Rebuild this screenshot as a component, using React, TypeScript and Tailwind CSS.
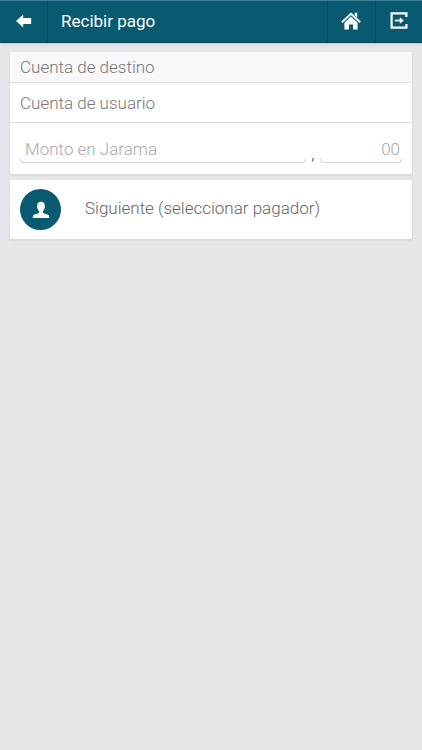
import { useState } from 'react';

function BackIcon() {
  return (
    <svg width="16" height="14" viewBox="0 0 16 14" fill="currentColor" aria-hidden="true">
      <path d="M0 7 7.2 0.4V4H15.2V10H7.2V13.6Z" />
    </svg>
  );
}

function HomeIcon() {
  return (
    <svg width="20" height="18" viewBox="0 0 20 18" aria-hidden="true">
      <path d="M13.6 0.8h2.6v5l-2.6-2.5z" fill="currentColor" />
      <path d="M0.9 10.2 10 1.7l9.1 8.5" fill="none" stroke="currentColor" strokeWidth="1.9" />
      <path d="M10 4.6 3.4 10.8v6.6H8V12.6h4v4.8h4.6V10.8z" fill="currentColor" />
    </svg>
  );
}

function LogoutIcon() {
  return (
    <svg width="18" height="17" viewBox="0 0 18 17" fill="none" stroke="currentColor" aria-hidden="true">
      <path d="M16.4 5V1.4H1.6V15.6H16.4V12" strokeWidth="2.2" />
      <path d="M4.8 8.5h6" strokeWidth="1.8" />
      <path d="M9.8 5.2 13.8 8.5 9.8 11.8z" fill="currentColor" stroke="none" />
    </svg>
  );
}

function PersonIcon() {
  return (
    <svg width="18" height="18" viewBox="0 0 18 18" fill="currentColor" aria-hidden="true">
      <path d="M9 0.8c2.5 0 3.8 1.5 3.8 3.8 0 .5 0 .8-.1 1.1.5.2.4 1.5-.3 1.9-.3 1.3-.8 2.1-1.4 2.7v1.4c1.5 1 4.2 1.3 5.4 2.2.7.6.9 1.6.9 3.1H0.7c0-1.500.2-2.500.9-3.100 1.200-.9 3.900-1.200 5.400-2.200v-1.400c-.6-.6-1.100-1.400-1.400-2.700-.7-.4-.8-1.700-.3-1.900-.1-.3-.1-.6-.1-1.100C5.200 2.300 6.500.8 9 .8z" />
    </svg>
  );
}

// Open bracket under a text box
function Underline() {
  return <div className="h-1 rounded-b-sm border-x border-b border-[#d8d8d8]" />;
}

export default function App() {
  const [amount, setAmount] = useState('');
  const [cents, setCents] = useState('');

  return (
    <div className="min-h-screen bg-[#e7e6eb] font-['Roboto',sans-serif] text-[17px] leading-6 font-light text-[#666]">
      {/* Header */}
      <header className="flex h-[43px] items-stretch border-t border-b border-t-[#3c8293] border-b-[#064454] bg-[#075a70] text-white shadow-sm">
        <button aria-label="Volver" className="flex w-12 items-center justify-center border-r border-[#05485a] pb-0.5">
          <BackIcon />
        </button>
        <h1 className="flex flex-1 items-center pb-0.5 pl-[13px] font-normal">Recibir pago</h1>
        <button aria-label="Inicio" className="flex w-12 items-center justify-center border-l border-[#05485a] pr-0.5 pb-0.5">
          <HomeIcon />
        </button>
        <button aria-label="Salir" className="flex w-[47px] items-center justify-center border-l border-[#05485a] pb-0.5">
          <LogoutIcon />
        </button>
      </header>

      <main className="space-y-1.5 px-2.5 pt-[9px]">
        {/* Destination account and amount */}
        <section className="rounded-xs bg-white shadow-[0_1px_1px_1px_#dddce1]">
          <h2 className="rounded-t-xs border-b border-[#e1e0e5] bg-[#f8f8fd] px-2.5 py-[3px] text-[#777]">Cuenta de destino</h2>
          <p className="border-b border-[#e1e1e3] px-2.5 pt-2 pb-[7px] text-[#777]">Cuenta de usuario</p>
          <div className="flex items-end px-2.5 pt-[15px] pb-[11px]">
            <div className="min-w-0 flex-1">
              <input
                aria-label="Monto en Jarama"
                placeholder="Monto en Jarama"
                inputMode="numeric"
                value={amount}
                onChange={(e) => setAmount(e.target.value)}
                className="block h-[21px] w-full px-[5px] outline-none placeholder:text-[#aaa]"
              />
              <Underline />
            </div>
            <span className="w-3.5 text-center text-sm leading-4 font-normal">,</span>
            <div className="w-[82px]">
              <input
                aria-label="Centavos"
                placeholder="00"
                inputMode="numeric"
                value={cents}
                onChange={(e) => setCents(e.target.value)}
                className="block h-[21px] w-full px-0.5 text-right outline-none placeholder:text-[#aaa]"
              />
              <Underline />
            </div>
          </div>
        </section>

        {/* Next step */}
        <button className="flex w-full items-center rounded-xs bg-white px-2.5 py-[9px] text-left shadow-[0_1px_1px_1px_#dddce1]">
          <span className="flex size-[41px] items-center justify-center rounded-full bg-[#075a70] text-white">
            <PersonIcon />
          </span>
          <span className="pb-[3px] pl-6">Siguiente (seleccionar pagador)</span>
        </button>
      </main>
    </div>
  );
}
